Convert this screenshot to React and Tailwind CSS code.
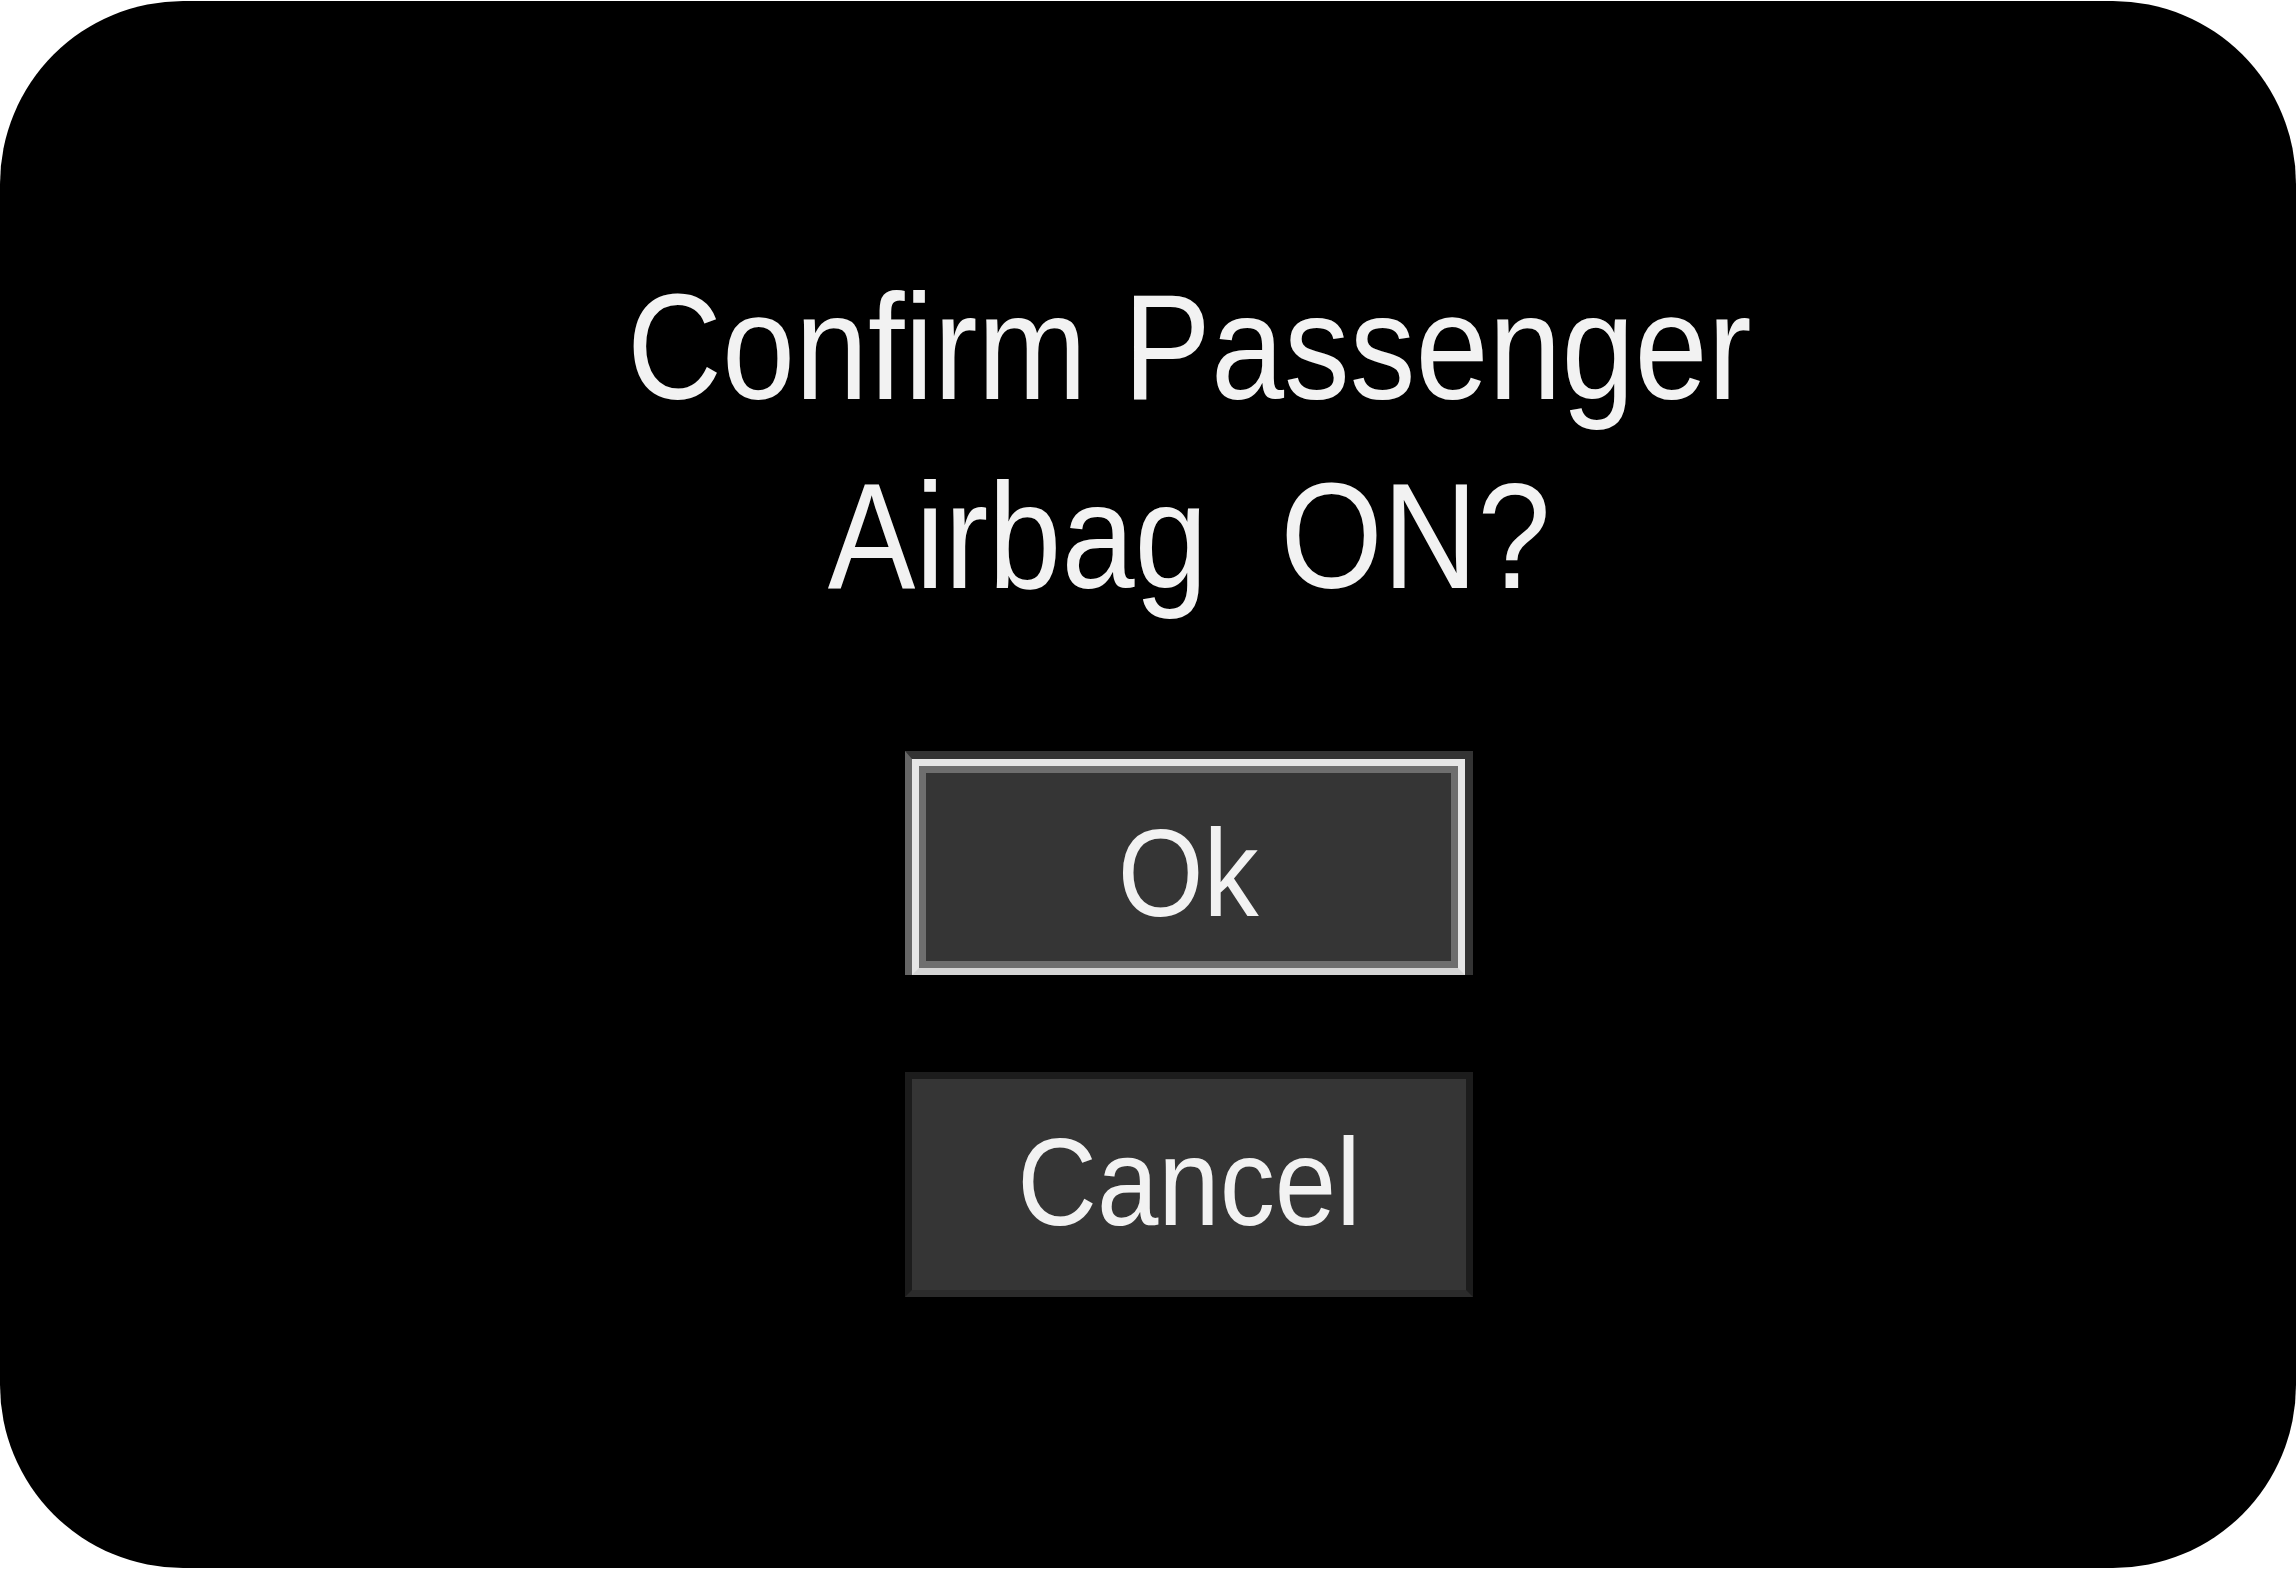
export default function App() {
  return (
    <div className="w-full h-[1570px] bg-white">
      <div className="mt-px h-[1567px] w-full rounded-[183px] bg-black flex flex-col items-center pt-[251px] pl-[82px] font-['Liberation_Sans',Arial,sans-serif] text-[#f2f2f2]">
        {/* Prompt */}
        <h1 className="text-center text-[151px] leading-[189px] whitespace-pre scale-x-[0.87]">
          <div>Confirm Passenger</div>
          <div>Airbag  ON?</div>
        </h1>

        {/* Ok (focused) */}
        <button className="mt-[121px] w-[568px] h-[224px] flex border-t-[8px] border-r-[8px] border-l-[7px] border-t-[#333] border-r-[#333] border-l-[#666] bg-black">
          <div className="flex-1 flex items-center justify-center pt-[12px] border-[7px] border-[#e6e6e6] border-b-[#d4d4d4] bg-[#353535] shadow-[inset_0_0_0_7px_#6e6e6e]">
            <span className="text-[124px] leading-none scale-x-[0.89]">Ok</span>
          </div>
        </button>

        {/* Cancel */}
        <button className="mt-[97px] w-[568px] h-[225px] flex items-center justify-center pb-[6px] border-[7px] border-[#1c1c1c] border-b-[#2b2b2b] bg-[#353535]">
          <span className="text-[124px] leading-none scale-x-[0.89]">Cancel</span>
        </button>
      </div>
    </div>
  );
}
